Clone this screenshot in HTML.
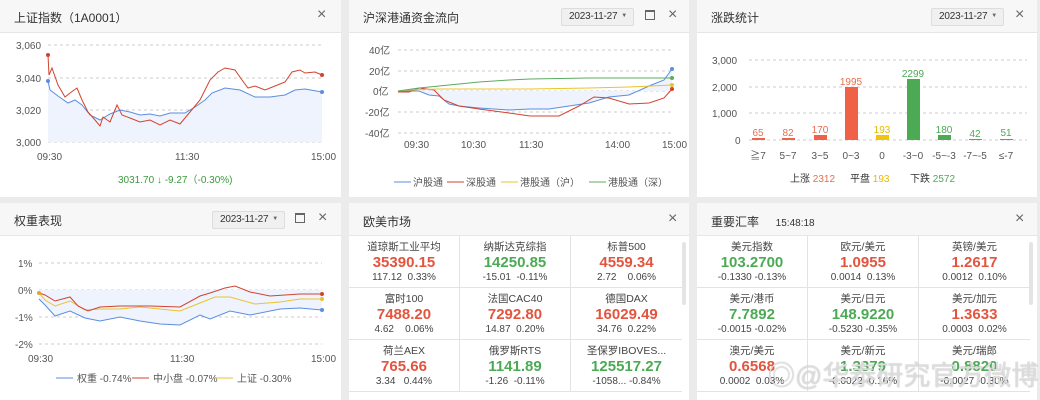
<!DOCTYPE html>
<html><head><meta charset="utf-8"><style>
*{margin:0;padding:0;box-sizing:border-box}
body{width:1040px;height:400px;background:#ebebeb;position:relative;overflow:hidden;font-family:"Liberation Sans","Noto Sans CJK SC",sans-serif;color:#333}
.p{position:absolute;background:#fff}
.h{position:absolute;left:0;right:0;top:0;height:33px;background:#f7f7f7;border-bottom:1px solid #e6e6e6}
.t{position:absolute;left:14px;top:9px;font-size:12px;color:#333}
.x{position:absolute;top:6px;font-size:16px;color:#666;line-height:18px}
.d{position:absolute;top:8px;width:73px;height:18px;border:1px solid #ddd;background:#f0f0f0;border-radius:2px;font-size:10px;padding:2px 0 0 7px;color:#333;letter-spacing:-0.2px}
.d:after{content:"▼";position:absolute;right:6px;top:4px;font-size:6px;color:#666}
.cal{position:absolute;top:10px;width:10px;height:10px;border:1px solid #666;border-top-width:2.5px}
svg{position:absolute;left:0;top:0}
svg text{font-family:"Liberation Sans","Noto Sans CJK SC",sans-serif;font-size:10px;fill:#555}
.c{position:absolute;width:111px;height:52px;border-right:1px solid #e3e3e3;border-bottom:1px solid #e3e3e3;text-align:center}
.c .n{font-size:10.5px;color:#444;margin-top:5px;line-height:13px}
.c .v{font-size:15px;font-weight:bold;line-height:18px}
.c .s{font-size:10px;color:#444;line-height:12px}
.r{color:#e3543f}.g{color:#4caa55}
</style></head><body>

<div class="p" style="left:0;top:0;width:341px;height:197px">
<div class="h"><div class="t">上证指数（1A0001）</div><div class="x" style="left:317px">×</div></div>
<svg width="341" height="197">
<g stroke="#ccc" stroke-dasharray="3,3"><line x1="48" y1="45" x2="322" y2="45"/><line x1="48" y1="78" x2="322" y2="78"/><line x1="48" y1="110" x2="322" y2="110"/><line x1="48" y1="142" x2="322" y2="142"/></g>
<text x="16" y="49">3,060</text><text x="16" y="82">3,040</text><text x="16" y="114">3,020</text><text x="16" y="146">3,000</text>
<text x="37" y="160">09:30</text><text x="175" y="160">11:30</text><text x="311" y="160">15:00</text>
<polygon fill="#eef3fd" points="48,81 50,90 58,96 68,103 75,100 82,105 90,115 100,120 110,114 120,110 130,112 140,115 150,114 160,116 170,113 185,113 195,107 205,100 212,93 225,88 240,90 255,97 270,97 285,95 295,90 305,89 322,92 322,142 48,142"/>
<polyline fill="none" stroke="#5b8ee0" stroke-width="1" points="48,81 50,90 58,96 68,103 75,100 82,105 90,115 100,120 110,114 120,110 130,112 140,115 150,114 160,116 170,113 185,113 195,107 205,100 212,93 225,88 240,90 255,97 270,97 285,95 295,90 305,89 322,92"/>
<polyline fill="none" stroke="#d2432e" stroke-width="1" points="48,55 49,75 52,68 58,85 65,97 70,93 77,88 82,100 88,112 95,120 100,126 103,117 110,122 117,105 122,115 130,118 140,122 150,120 160,125 170,120 180,124 185,118 190,112 200,100 205,90 210,80 218,72 225,68 235,70 242,80 248,88 255,86 265,90 275,86 285,82 292,72 300,70 305,73 315,72 322,75"/>
<circle cx="48" cy="55" r="2" fill="#d2432e"/><circle cx="322" cy="75" r="2" fill="#d2432e"/><circle cx="48" cy="81" r="2" fill="#5b8ee0"/><circle cx="322" cy="92" r="2" fill="#5b8ee0"/>
<text x="118" y="183" style="fill:#3d9a3d;font-size:10px">3031.70 ↓ -9.27（-0.30%)</text>
</svg></div>

<div class="p" style="left:349px;top:0;width:340px;height:197px">
<div class="h"><div class="t">沪深港通资金流向</div><div class="d" style="left:212px">2023-11-27</div><div class="cal" style="left:296px"></div><div class="x" style="left:319px">×</div></div>
<svg width="340" height="197">
<g stroke="#ccc" stroke-dasharray="3,3"><line x1="49" y1="50" x2="323" y2="50"/><line x1="49" y1="71" x2="323" y2="71"/><line x1="49" y1="91" x2="323" y2="91"/><line x1="49" y1="112" x2="323" y2="112"/><line x1="49" y1="133" x2="323" y2="133"/></g>
<text x="20" y="54">40亿</text><text x="20" y="75">20亿</text><text x="24" y="95">0亿</text><text x="16" y="116">-20亿</text><text x="16" y="137">-40亿</text>
<text x="55" y="148">09:30</text><text x="112" y="148">10:30</text><text x="170" y="148">11:30</text><text x="256" y="148">14:00</text><text x="313" y="148">15:00</text>
<polygon fill="#eef3fd" points="49,91 70,91 80,95 90,96 100,104 110,106 130,108 160,110 181,109 200,109 240,103 260,97 280,95 300,86 315,80 323,69 323,91"/>
<polyline fill="none" stroke="#5b8ee0" points="49,91 70,91 80,95 90,96 100,104 110,106 130,108 160,110 181,109 200,109 240,103 260,97 280,95 300,86 315,80 323,69"/>
<polyline fill="none" stroke="#d2432e" points="49,92 60,92 70,88 85,90 95,100 110,106 130,109 160,113 181,116 210,116 230,106 245,97 260,98 280,104 300,103 315,98 323,89"/>
<polyline fill="none" stroke="#e8c430" points="49,91 60,90 90,89 130,89 181,89 240,88 280,87 323,85"/>
<polyline fill="none" stroke="#5daa60" points="49,91 70,88 100,85 130,82 160,80 181,79 240,78 280,78 323,78"/>
<circle cx="323" cy="69" r="2" fill="#5b8ee0"/><circle cx="323" cy="89" r="2" fill="#d2432e"/><circle cx="323" cy="85" r="2" fill="#e8c430"/><circle cx="323" cy="78" r="2" fill="#5daa60"/>
<line x1="45" y1="182" x2="62" y2="182" stroke="#5b8ee0"/><text x="64" y="186">沪股通</text>
<line x1="98" y1="182" x2="115" y2="182" stroke="#d2432e"/><text x="117" y="186">深股通</text>
<line x1="152" y1="182" x2="169" y2="182" stroke="#e8c430"/><text x="171" y="186">港股通（沪）</text>
<line x1="240" y1="182" x2="257" y2="182" stroke="#5daa60"/><text x="259" y="186">港股通（深）</text>
</svg></div>

<div class="p" style="left:697px;top:0;width:340px;height:197px">
<div class="h"><div class="t">涨跌统计</div><div class="d" style="left:234px">2023-11-27</div><div class="x" style="left:318px">×</div></div>
<svg width="340" height="197">
<g stroke="#ccc" stroke-dasharray="3,3"><line x1="52" y1="60" x2="330" y2="60"/><line x1="52" y1="87" x2="330" y2="87"/><line x1="52" y1="113" x2="330" y2="113"/><line x1="52" y1="140" x2="330" y2="140"/></g>
<text x="15" y="64">3,000</text><text x="15" y="91">2,000</text><text x="15" y="117">1,000</text><text x="38" y="144">0</text>
<g fill="#ef6248"><rect x="55" y="138" width="13" height="2"/><rect x="85" y="138" width="13" height="2"/><rect x="117" y="135" width="13" height="5"/><rect x="148" y="87" width="13" height="53"/></g>
<rect x="179" y="135" width="13" height="5" fill="#f2c40f"/>
<g fill="#4caa55"><rect x="210" y="79" width="13" height="61"/><rect x="241" y="135" width="13" height="5"/><rect x="272" y="139" width="13" height="1"/><rect x="303" y="139" width="13" height="1"/></g>
<g text-anchor="middle" style="font-size:11px"><text x="61" y="136" style="fill:#e3704f">65</text><text x="91" y="136" style="fill:#e3704f">82</text><text x="123" y="133" style="fill:#e3704f">170</text><text x="154" y="85" style="fill:#e3704f">1995</text><text x="185" y="133" style="fill:#e8b800">193</text><text x="216" y="77" style="fill:#4caa55">2299</text><text x="247" y="133" style="fill:#4caa55">180</text><text x="278" y="137" style="fill:#4caa55">42</text><text x="309" y="136" style="fill:#4caa55">51</text></g>
<g text-anchor="middle"><text x="61" y="159">≧7</text><text x="91" y="159">5~7</text><text x="123" y="159">3~5</text><text x="154" y="159">0~3</text><text x="185" y="159">0</text><text x="216" y="159">-3~0</text><text x="247" y="159">-5~-3</text><text x="278" y="159">-7~-5</text><text x="309" y="159">≤-7</text></g>
<text x="93" y="182" style="fill:#333">上涨 <tspan style="fill:#e3704f">2312</tspan></text>
<text x="153" y="182" style="fill:#333">平盘 <tspan style="fill:#e8b800">193</tspan></text>
<text x="213" y="182" style="fill:#333">下跌 <tspan style="fill:#4caa55">2572</tspan></text>
</svg></div>

<div class="p" style="left:0;top:203px;width:341px;height:197px">
<div class="h"><div class="t">权重表现</div><div class="d" style="left:212px">2023-11-27</div><div class="cal" style="left:295px"></div><div class="x" style="left:318px">×</div></div>
<svg width="341" height="197">
<g stroke="#ccc" stroke-dasharray="3,3"><line x1="39" y1="60" x2="322" y2="60"/><line x1="39" y1="87" x2="322" y2="87"/><line x1="39" y1="114" x2="322" y2="114"/><line x1="39" y1="141" x2="322" y2="141"/></g>
<text x="18" y="64">1%</text><text x="18" y="91">0%</text><text x="15" y="118">-1%</text><text x="15" y="145">-2%</text>
<text x="28" y="159">09:30</text><text x="170" y="159">11:30</text><text x="311" y="159">15:00</text>
<polygon fill="#eef3fd" points="39,87 322,87 322,107 300,105 280,106 250,112 230,108 210,116 200,112 180,122 160,121 140,118 120,114 100,118 85,115 70,108 55,113 45,102 39,96"/>
<polyline fill="none" stroke="#5b8ee0" points="39,96 45,102 55,113 70,108 85,115 100,118 120,114 140,118 160,121 180,122 200,112 210,116 230,108 250,112 280,106 300,105 322,107"/>
<polyline fill="none" stroke="#e8c430" points="39,90 45,97 55,103 70,98 85,107 100,106 120,106 140,104 160,106 180,108 200,100 215,94 230,94 255,101 280,99 300,96 322,96"/>
<polyline fill="none" stroke="#d2432e" points="39,90 45,92 55,98 70,94 78,103 88,108 100,104 120,103 150,103 180,104 200,93 210,90 225,85 235,83 250,89 270,93 300,91 322,91"/>
<circle cx="322" cy="107" r="2" fill="#5b8ee0"/><circle cx="322" cy="96" r="2" fill="#e8c430"/><circle cx="322" cy="91" r="2" fill="#d2432e"/><circle cx="39" cy="90" r="2" fill="#e8a030"/>
<line x1="56" y1="175" x2="73" y2="175" stroke="#5b8ee0"/><text x="77" y="179">权重 -0.74%</text>
<line x1="132" y1="175" x2="149" y2="175" stroke="#d2432e"/><text x="153" y="179">中小盘 -0.07%</text>
<line x1="216" y1="175" x2="233" y2="175" stroke="#e8c430"/><text x="237" y="179">上证 -0.30%</text>
</svg></div>

<div class="p" style="left:349px;top:203px;width:340px;height:197px">
<div class="h"><div class="t" style="top:10px">欧美市场</div><div class="x" style="left:319px;top:7px">×</div></div>
<div style="position:absolute;left:333px;top:39px;width:4px;height:63px;background:#e4e4e4;border-radius:2px"></div>
<div class="c" style="left:0;top:33px"><div class="n">道琼斯工业平均</div><div class="v r">35390.15</div><div class="s">117.12&nbsp;&nbsp;0.33%</div></div>
<div class="c" style="left:111px;top:33px"><div class="n">纳斯达克综指</div><div class="v g">14250.85</div><div class="s">-15.01&nbsp;&nbsp;-0.11%</div></div>
<div class="c" style="left:222px;top:33px;border-right:none"><div class="n">标普500</div><div class="v r">4559.34</div><div class="s">2.72&nbsp;&nbsp;&nbsp;&nbsp;0.06%</div></div>
<div class="c" style="left:0;top:85px"><div class="n">富时100</div><div class="v r">7488.20</div><div class="s">4.62&nbsp;&nbsp;&nbsp;&nbsp;0.06%</div></div>
<div class="c" style="left:111px;top:85px"><div class="n">法国CAC40</div><div class="v r">7292.80</div><div class="s">14.87&nbsp;&nbsp;0.20%</div></div>
<div class="c" style="left:222px;top:85px;border-right:none"><div class="n">德国DAX</div><div class="v r">16029.49</div><div class="s">34.76&nbsp;&nbsp;0.22%</div></div>
<div class="c" style="left:0;top:137px"><div class="n">荷兰AEX</div><div class="v r">765.66</div><div class="s">3.34&nbsp;&nbsp;&nbsp;0.44%</div></div>
<div class="c" style="left:111px;top:137px"><div class="n">俄罗斯RTS</div><div class="v g">1141.89</div><div class="s">-1.26&nbsp;&nbsp;-0.11%</div></div>
<div class="c" style="left:222px;top:137px;border-right:none"><div class="n">圣保罗IBOVES...</div><div class="v g">125517.27</div><div class="s">-1058...&nbsp;-0.84%</div></div>
</div>

<div class="p" style="left:697px;top:203px;width:340px;height:197px">
<div class="h"><div class="t" style="top:10px">重要汇率&nbsp;&nbsp;&nbsp;&nbsp;&nbsp;<span style="font-size:10px">15:48:18</span></div><div class="x" style="left:318px;top:7px">×</div></div>
<div style="position:absolute;left:332px;top:39px;width:4px;height:63px;background:#e4e4e4;border-radius:2px"></div>
<div class="c" style="left:0;top:33px"><div class="n">美元指数</div><div class="v g">103.2700</div><div class="s">-0.1330 -0.13%</div></div>
<div class="c" style="left:111px;top:33px"><div class="n">欧元/美元</div><div class="v r">1.0955</div><div class="s">0.0014&nbsp;&nbsp;0.13%</div></div>
<div class="c" style="left:222px;top:33px;border-right:none"><div class="n">英镑/美元</div><div class="v r">1.2617</div><div class="s">0.0012&nbsp;&nbsp;0.10%</div></div>
<div class="c" style="left:0;top:85px"><div class="n">美元/港币</div><div class="v g">7.7892</div><div class="s">-0.0015 -0.02%</div></div>
<div class="c" style="left:111px;top:85px"><div class="n">美元/日元</div><div class="v g">148.9220</div><div class="s">-0.5230 -0.35%</div></div>
<div class="c" style="left:222px;top:85px;border-right:none"><div class="n">美元/加元</div><div class="v r">1.3633</div><div class="s">0.0003&nbsp;&nbsp;0.02%</div></div>
<div class="c" style="left:0;top:137px"><div class="n">澳元/美元</div><div class="v r">0.6568</div><div class="s">0.0002&nbsp;&nbsp;0.03%</div></div>
<div class="c" style="left:111px;top:137px"><div class="n">美元/新元</div><div class="v g">1.3379</div><div class="s">-0.0022 -0.16%</div></div>
<div class="c" style="left:222px;top:137px;border-right:none"><div class="n">美元/瑞郎</div><div class="v g">0.8820</div><div class="s">-0.0027 -0.30%</div></div>
</div>

<div style="position:absolute;left:768px;top:360px;font-size:27px;line-height:32px;color:rgba(240,240,240,0.75);text-shadow:0 0 1px #999;font-family:'Liberation Sans','Noto Sans CJK SC',sans-serif;white-space:nowrap">◎@华泰研究官方微博</div>
</body></html>
